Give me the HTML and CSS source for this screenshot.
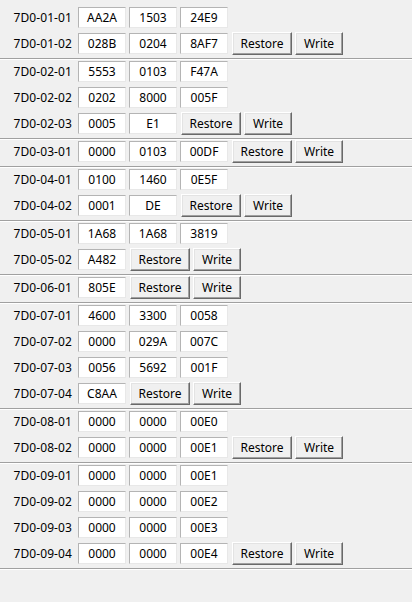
FILE: index.html
```html
<!DOCTYPE html>
<html>
<head>
<meta charset="utf-8">
<link rel="stylesheet" href="styles.css">
</head>
<body>
<div class="panel">
  <div class="group">
    <div class="row"><span class="label">7D0-01-01</span><span class="field">AA2A</span><span class="field">1503</span><span class="field">24E9</span></div>
    <div class="row"><span class="label">7D0-01-02</span><span class="field">028B</span><span class="field">0204</span><span class="field">8AF7</span><button class="btn btn-restore">Restore</button><button class="btn btn-write">Write</button></div>
  </div>
  <div class="group">
    <div class="row"><span class="label">7D0-02-01</span><span class="field">5553</span><span class="field">0103</span><span class="field">F47A</span></div>
    <div class="row"><span class="label">7D0-02-02</span><span class="field">0202</span><span class="field">8000</span><span class="field">005F</span></div>
    <div class="row"><span class="label">7D0-02-03</span><span class="field">0005</span><span class="field">E1</span><button class="btn btn-restore">Restore</button><button class="btn btn-write">Write</button></div>
  </div>
  <div class="group">
    <div class="row"><span class="label">7D0-03-01</span><span class="field">0000</span><span class="field">0103</span><span class="field">00DF</span><button class="btn btn-restore">Restore</button><button class="btn btn-write">Write</button></div>
  </div>
  <div class="group">
    <div class="row"><span class="label">7D0-04-01</span><span class="field">0100</span><span class="field">1460</span><span class="field">0E5F</span></div>
    <div class="row"><span class="label">7D0-04-02</span><span class="field">0001</span><span class="field">DE</span><button class="btn btn-restore">Restore</button><button class="btn btn-write">Write</button></div>
  </div>
  <div class="group">
    <div class="row"><span class="label">7D0-05-01</span><span class="field">1A68</span><span class="field">1A68</span><span class="field">3819</span></div>
    <div class="row"><span class="label">7D0-05-02</span><span class="field">A482</span><button class="btn btn-restore">Restore</button><button class="btn btn-write">Write</button></div>
  </div>
  <div class="group">
    <div class="row"><span class="label">7D0-06-01</span><span class="field">805E</span><button class="btn btn-restore">Restore</button><button class="btn btn-write">Write</button></div>
  </div>
  <div class="group">
    <div class="row"><span class="label">7D0-07-01</span><span class="field">4600</span><span class="field">3300</span><span class="field">0058</span></div>
    <div class="row"><span class="label">7D0-07-02</span><span class="field">0000</span><span class="field">029A</span><span class="field">007C</span></div>
    <div class="row"><span class="label">7D0-07-03</span><span class="field">0056</span><span class="field">5692</span><span class="field">001F</span></div>
    <div class="row"><span class="label">7D0-07-04</span><span class="field">C8AA</span><button class="btn btn-restore">Restore</button><button class="btn btn-write">Write</button></div>
  </div>
  <div class="group">
    <div class="row"><span class="label">7D0-08-01</span><span class="field">0000</span><span class="field">0000</span><span class="field">00E0</span></div>
    <div class="row"><span class="label">7D0-08-02</span><span class="field">0000</span><span class="field">0000</span><span class="field">00E1</span><button class="btn btn-restore">Restore</button><button class="btn btn-write">Write</button></div>
  </div>
  <div class="group">
    <div class="row"><span class="label">7D0-09-01</span><span class="field">0000</span><span class="field">0000</span><span class="field">00E1</span></div>
    <div class="row"><span class="label">7D0-09-02</span><span class="field">0000</span><span class="field">0000</span><span class="field">00E2</span></div>
    <div class="row"><span class="label">7D0-09-03</span><span class="field">0000</span><span class="field">0000</span><span class="field">00E3</span></div>
    <div class="row"><span class="label">7D0-09-04</span><span class="field">0000</span><span class="field">0000</span><span class="field">00E4</span><button class="btn btn-restore">Restore</button><button class="btn btn-write">Write</button></div>
  </div>
</div>
</body>
</html>
```
FILE: styles.css
```css
html, body {
  margin: 0;
  padding: 0;
  background: #f0f0f0;
  width: 412px;
  height: 602px;
  overflow: hidden;
}
body {
  font-family: "Noto Sans", "DejaVu Sans", sans-serif;
  font-size: 12px;
  color: #000;
}
.panel {
  padding-top: 6px;
  display: flex;
  flex-direction: column;
}
.group {
  display: flex;
  flex-direction: column;
  gap: 5px;
  padding: 1px 0 4px 0;
  border-bottom: 1px solid #a0a0a0;
  box-shadow: 0 1px 0 #ffffff;
  margin-bottom: 1px;
}
.row {
  display: flex;
  align-items: center;
  height: 21px;
  gap: 3px;
}
.label {
  width: 72px;
  text-align: right;
  margin-right: 3px;
  letter-spacing: 0.1px;
  line-height: 21px;
}
.field {
  box-sizing: border-box;
  width: 48px;
  height: 21px;
  background: #fff;
  border-top: 1px solid #b4b4b4;
  border-left: 1px solid #b4b4b4;
  border-right: 1px solid #e8e8e8;
  border-bottom: 1px solid #e8e8e8;
  text-align: center;
  line-height: 19px;
}
.btn {
  box-sizing: border-box;
  height: 23px;
  padding: 0;
  margin: 0;
  font: inherit;
  color: #000;
  background: #f0f0f0;
  border-top: 1px solid #ffffff;
  border-left: 1px solid #ffffff;
  border-right: 1px solid #696969;
  border-bottom: 1px solid #696969;
  box-shadow: inset -1px -1px 0 #a0a0a0, inset 1px 1px 0 #e3e3e3;
  line-height: 20px;
}
.btn-restore {
  width: 60px;
  margin-left: 1px;
}
.btn-write {
  width: 48px;
}
```
